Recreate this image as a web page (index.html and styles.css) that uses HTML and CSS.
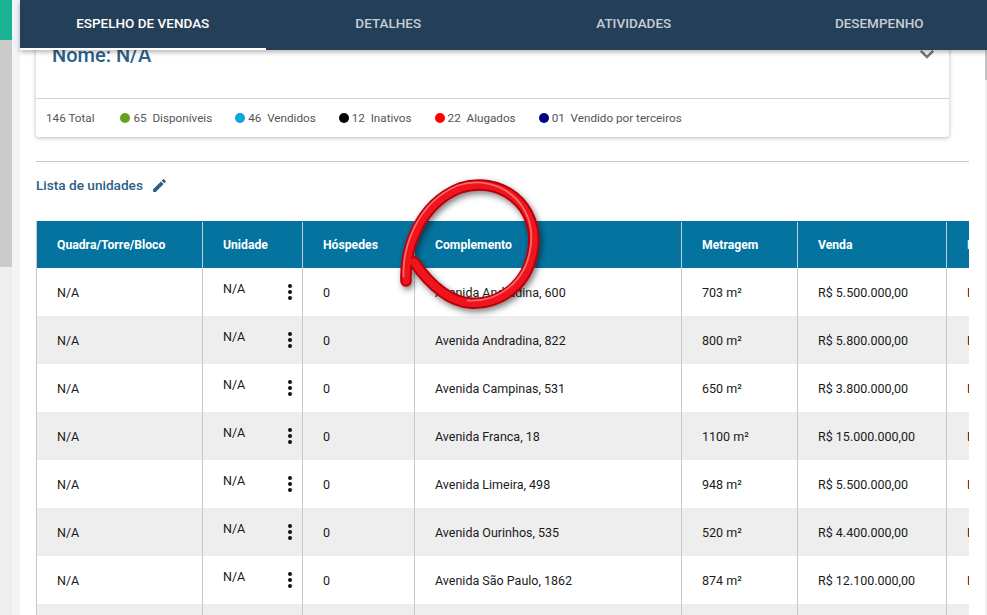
FILE: index.html
```html
<!DOCTYPE html>
<html lang="pt-BR">
<head>
<meta charset="utf-8">
<title>Espelho de vendas</title>
<link rel="stylesheet" href="styles.css">
</head>
<body>
<div class="page">
  <div class="side-scroll">
    <div class="side-teal"></div>
    <div class="side-thumb"></div>
  </div>
  <div class="side-gap"></div>
  <div class="main">
    <nav class="tabs">
      <div class="tab active">ESPELHO DE VENDAS</div>
      <div class="tab">DETALHES</div>
      <div class="tab">ATIVIDADES</div>
      <div class="tab">DESEMPENHO</div>
    </nav>
    <div class="body">
      <div class="content">
        <section class="card">
          <div class="card-head">
            <h1 class="card-title">Nome: N/A</h1>
            <svg class="chevron" viewBox="0 0 24 24" width="28" height="28"><path d="M7.41 8.59L12 13.17l4.59-4.58L18 10l-6 6-6-6z" fill="#757575"/></svg>
          </div>
          <div class="legend">
            <span class="leg-item first">146 Total</span>
            <span class="leg-item"><i class="dot green"></i>65  Disponíveis</span>
            <span class="leg-item"><i class="dot blue"></i>46  Vendidos</span>
            <span class="leg-item"><i class="dot black"></i>12  Inativos</span>
            <span class="leg-item"><i class="dot red"></i>22  Alugados</span>
            <span class="leg-item"><i class="dot navy"></i>01  Vendido por terceiros</span>
          </div>
        </section>
        <hr class="rule">
        <div class="list-title">Lista de unidades
          <svg class="pencil" viewBox="0 0 24 24" width="17" height="17"><path d="M3 17.25V21h3.75L17.81 9.94l-3.75-3.75L3 17.25zM20.71 7.04c.39-.39.39-1.02 0-1.41l-2.34-2.34c-.39-.39-1.02-.39-1.41 0l-1.83 1.83 3.75 3.75 1.83-1.83z" fill="#2b6089"/></svg>
        </div>
        <div class="table">
          <div class="row head">
            <div class="cell">Quadra/Torre/Bloco</div>
            <div class="cell">Unidade</div>
            <div class="cell">Hóspedes</div>
            <div class="cell">Complemento</div>
            <div class="cell">Metragem</div>
            <div class="cell">Venda</div>
            <div class="cell">Locação</div>
          </div>
          <div class="row">
            <div class="cell">N/A</div>
            <div class="cell unit"><span class="unit-name">N/A</span><svg class="kebab" viewBox="0 0 24 24" width="24" height="24"><circle cx="12" cy="6" r="2"/><circle cx="12" cy="12" r="2"/><circle cx="12" cy="18" r="2"/></svg></div>
            <div class="cell">0</div>
            <div class="cell">Avenida Andradina, 600</div>
            <div class="cell">703 m²</div>
            <div class="cell">R$ 5.500.000,00</div>
            <div class="cell">N/A</div>
          </div>
          <div class="row">
            <div class="cell">N/A</div>
            <div class="cell unit"><span class="unit-name">N/A</span><svg class="kebab" viewBox="0 0 24 24" width="24" height="24"><circle cx="12" cy="6" r="2"/><circle cx="12" cy="12" r="2"/><circle cx="12" cy="18" r="2"/></svg></div>
            <div class="cell">0</div>
            <div class="cell">Avenida Andradina, 822</div>
            <div class="cell">800 m²</div>
            <div class="cell">R$ 5.800.000,00</div>
            <div class="cell">N/A</div>
          </div>
          <div class="row">
            <div class="cell">N/A</div>
            <div class="cell unit"><span class="unit-name">N/A</span><svg class="kebab" viewBox="0 0 24 24" width="24" height="24"><circle cx="12" cy="6" r="2"/><circle cx="12" cy="12" r="2"/><circle cx="12" cy="18" r="2"/></svg></div>
            <div class="cell">0</div>
            <div class="cell">Avenida Campinas, 531</div>
            <div class="cell">650 m²</div>
            <div class="cell">R$ 3.800.000,00</div>
            <div class="cell">N/A</div>
          </div>
          <div class="row">
            <div class="cell">N/A</div>
            <div class="cell unit"><span class="unit-name">N/A</span><svg class="kebab" viewBox="0 0 24 24" width="24" height="24"><circle cx="12" cy="6" r="2"/><circle cx="12" cy="12" r="2"/><circle cx="12" cy="18" r="2"/></svg></div>
            <div class="cell">0</div>
            <div class="cell">Avenida Franca, 18</div>
            <div class="cell">1100 m²</div>
            <div class="cell">R$ 15.000.000,00</div>
            <div class="cell">N/A</div>
          </div>
          <div class="row">
            <div class="cell">N/A</div>
            <div class="cell unit"><span class="unit-name">N/A</span><svg class="kebab" viewBox="0 0 24 24" width="24" height="24"><circle cx="12" cy="6" r="2"/><circle cx="12" cy="12" r="2"/><circle cx="12" cy="18" r="2"/></svg></div>
            <div class="cell">0</div>
            <div class="cell">Avenida Limeira, 498</div>
            <div class="cell">948 m²</div>
            <div class="cell">R$ 5.500.000,00</div>
            <div class="cell">N/A</div>
          </div>
          <div class="row">
            <div class="cell">N/A</div>
            <div class="cell unit"><span class="unit-name">N/A</span><svg class="kebab" viewBox="0 0 24 24" width="24" height="24"><circle cx="12" cy="6" r="2"/><circle cx="12" cy="12" r="2"/><circle cx="12" cy="18" r="2"/></svg></div>
            <div class="cell">0</div>
            <div class="cell">Avenida Ourinhos, 535</div>
            <div class="cell">520 m²</div>
            <div class="cell">R$ 4.400.000,00</div>
            <div class="cell">N/A</div>
          </div>
          <div class="row">
            <div class="cell">N/A</div>
            <div class="cell unit"><span class="unit-name">N/A</span><svg class="kebab" viewBox="0 0 24 24" width="24" height="24"><circle cx="12" cy="6" r="2"/><circle cx="12" cy="12" r="2"/><circle cx="12" cy="18" r="2"/></svg></div>
            <div class="cell">0</div>
            <div class="cell">Avenida São Paulo, 1862</div>
            <div class="cell">874 m²</div>
            <div class="cell">R$ 12.100.000,00</div>
            <div class="cell">N/A</div>
          </div>
          <div class="row">
            <div class="cell">N/A</div>
            <div class="cell unit"><span class="unit-name">N/A</span><svg class="kebab" viewBox="0 0 24 24" width="24" height="24"><circle cx="12" cy="6" r="2"/><circle cx="12" cy="12" r="2"/><circle cx="12" cy="18" r="2"/></svg></div>
            <div class="cell">0</div>
            <div class="cell">Avenida Taubaté, 220</div>
            <div class="cell">690 m²</div>
            <div class="cell">R$ 4.900.000,00</div>
            <div class="cell">N/A</div>
          </div>
        </div>
      </div>
      <div class="vscroll"><div class="vthumb"></div></div>
    </div>
  </div>
  <svg class="annotation" viewBox="0 0 987 615" width="987" height="615">
    <defs>
      <filter id="shadow" x="-20%" y="-20%" width="140%" height="140%">
        <feDropShadow dx="2" dy="3" stdDeviation="3" flood-color="#000" flood-opacity="0.5"/>
      </filter>
    </defs>
    <g filter="url(#shadow)" fill="none" stroke-linecap="round">
      <path d="M406 281 C405 250, 418 205, 460 188 C500 175, 540 205, 533 250 C528 285, 500 305, 470 303 C452 302, 432 288, 414 262" stroke="#b8000a" stroke-width="11.5"/>
      <path d="M406 281 C405 250, 418 205, 460 188 C500 175, 540 205, 533 250 C528 285, 500 305, 470 303 C452 302, 432 288, 414 262" stroke="#ee141d" stroke-width="7.5"/>
      <path d="M405 278 C404 250, 417 205, 459 187 C499 174, 539 204, 532 249 C527 284, 499 304, 469 302" stroke="#ff9090" stroke-width="1.8" stroke-opacity="0.7" transform="translate(-1.5 -1.5)"/>
    </g>
  </svg>
</div>
</body>
</html>
```

FILE: styles.css
```css
* { box-sizing: border-box; }

html, body {
  margin: 0;
  padding: 0;
  width: 987px;
  height: 615px;
  overflow: hidden;
  background: #ffffff;
  font-family: Roboto, "Liberation Sans", Arial, sans-serif;
}

.page {
  position: relative;
  display: flex;
  width: 987px;
  height: 615px;
  overflow: hidden;
}

.side-scroll {
  flex: 0 0 12px;
  display: flex;
  flex-direction: column;
  background: #eeeeee;
}

.side-teal {
  height: 40px;
  background: #1bb394;
}

.side-thumb {
  height: 227px;
  background: #cbcbcb;
}

.side-gap {
  flex: 0 0 8px;
  background: #f3f4f8;
}

.main {
  flex: 1 1 auto;
  display: flex;
  flex-direction: column;
  min-width: 0;
  background: #ffffff;
}

.tabs {
  position: relative;
  z-index: 2;
  flex: 0 0 50px;
  display: flex;
  background: #243f58;
  box-shadow: 0 2px 5px rgba(0, 0, 0, 0.3);
  overflow: hidden;
}

.tab {
  flex: 0 0 245.5px;
  display: flex;
  align-items: center;
  justify-content: center;
  height: 50px;
  padding-bottom: 2px;
  font-size: 13.5px;
  font-weight: 500;
  color: #c6ced7;
  border-bottom: 2px solid transparent;
}

.tab.active {
  color: #ffffff;
  border-bottom-color: #ffffff;
}

.body {
  flex: 1 1 auto;
  display: flex;
  min-height: 0;
}

.content {
  flex: 1 1 auto;
  min-width: 0;
  padding: 0 16px;
}

.vscroll {
  flex: 0 0 2px;
  background: #f1f1f1;
}

.vthumb {
  height: 30px;
  background: #c1c1c1;
}

/* Card */
.card {
  margin: -20px 20px 0 0;
  background: #ffffff;
  border-radius: 3px;
  box-shadow: 0 1px 4px rgba(0, 0, 0, 0.28);
}

.card-head {
  display: flex;
  justify-content: space-between;
  align-items: flex-start;
  padding: 13px 8px 30px 16px;
}

.card-title {
  margin: 0;
  font-size: 20px;
  line-height: 24px;
  font-weight: 500;
  color: #2b6089;
}

.chevron {
  display: block;
  margin-top: -3px;
}

.legend {
  display: flex;
  align-items: center;
  gap: 23px;
  height: 39px;
  padding: 0 10px;
  border-top: 1px solid #d3d3d3;
  font-size: 11.7px;
  color: #555555;
  white-space: pre;
}

.leg-item {
  display: flex;
  align-items: center;
}

.leg-item.first {
  margin-right: 3px;
}

.dot {
  display: inline-block;
  width: 10px;
  height: 10px;
  border-radius: 50%;
  margin-right: 3px;
}

.dot.green { background: #66a31c; }
.dot.blue { background: #0ea5df; }
.dot.black { background: #000000; }
.dot.red { background: #ff0000; }
.dot.navy { background: #00007f; }

.rule {
  margin: 24px 0 0 0;
  height: 0;
  border: 0;
  border-top: 1px solid #cacaca;
}

.list-title {
  display: flex;
  align-items: center;
  gap: 8px;
  margin-top: 13px;
  height: 20px;
  font-size: 13.6px;
  font-weight: 500;
  color: #2b6089;
}

.pencil {
  display: block;
}

/* Table */
.table {
  margin-top: 26px;
  border-left: 1px solid #c8c8c8;
  overflow: hidden;
}

.row {
  display: grid;
  grid-template-columns: 166px 100px 112px 267px 116px 149px 140px;
  height: 48px;
  background: #ffffff;
}

.row:nth-child(odd) {
  background: #eeeeee;
}

.row.head {
  height: 47px;
  padding-top: 1px;
  background: #04739f;
  color: #ffffff;
  font-weight: 700;
}

.cell {
  display: flex;
  align-items: center;
  padding-left: 20px;
  border-right: 1px solid #c8c8c8;
  font-size: 12.5px;
  color: #1a1a1a;
  white-space: nowrap;
}

.head .cell {
  font-size: 12.2px;
  color: #ffffff;
  border-right-color: #c3ccd3;
}

.cell.unit {
  justify-content: space-between;
  align-items: center;
  padding-right: 0;
}

.unit-name {
  align-self: flex-start;
  margin-top: 13px;
}

.kebab {
  display: block;
  fill: #111111;
}

.annotation {
  position: absolute;
  left: 0;
  top: 0;
  pointer-events: none;
}
```
